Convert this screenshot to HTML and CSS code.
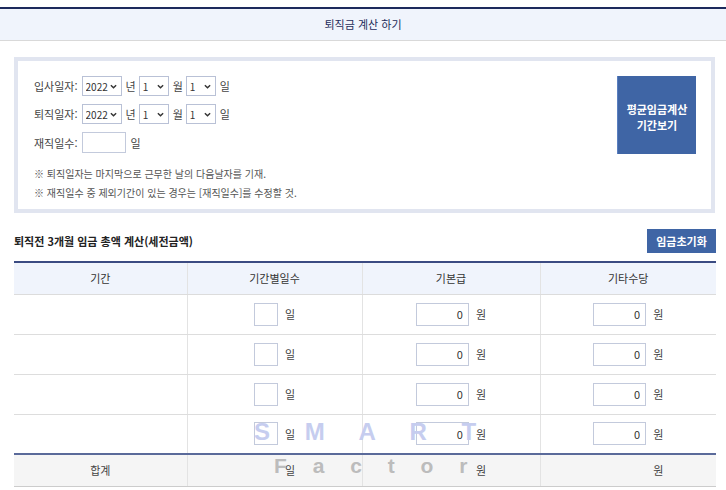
FILE: index.html
```html
<!DOCTYPE html>
<html lang="ko">
<head>
<meta charset="utf-8">
<title>퇴직금 계산 하기</title>
<link rel="stylesheet" href="styles.css">
</head>
<body>
<div class="page">
  <div class="title-bar">퇴직금 계산 하기</div>
  <div class="content">
    <div class="date-box">
      <div class="date-form">
        <div class="form-row">
          <span class="label">입사일자:</span>
          <span class="sel-wrap sel-year"><select class="sel"><option>2022</option></select><svg class="chev" viewBox="0 0 8 5"><path d="M1 1 L4 4 L7 1" /></svg></span>
          <span class="unit">년</span>
          <span class="sel-wrap sel-small"><select class="sel"><option>1</option></select><svg class="chev" viewBox="0 0 8 5"><path d="M1 1 L4 4 L7 1" /></svg></span>
          <span class="unit">월</span>
          <span class="sel-wrap sel-small"><select class="sel"><option>1</option></select><svg class="chev" viewBox="0 0 8 5"><path d="M1 1 L4 4 L7 1" /></svg></span>
          <span class="unit">일</span>
        </div>
        <div class="form-row">
          <span class="label">퇴직일자:</span>
          <span class="sel-wrap sel-year"><select class="sel"><option>2022</option></select><svg class="chev" viewBox="0 0 8 5"><path d="M1 1 L4 4 L7 1" /></svg></span>
          <span class="unit">년</span>
          <span class="sel-wrap sel-small"><select class="sel"><option>1</option></select><svg class="chev" viewBox="0 0 8 5"><path d="M1 1 L4 4 L7 1" /></svg></span>
          <span class="unit">월</span>
          <span class="sel-wrap sel-small"><select class="sel"><option>1</option></select><svg class="chev" viewBox="0 0 8 5"><path d="M1 1 L4 4 L7 1" /></svg></span>
          <span class="unit">일</span>
        </div>
        <div class="form-row form-row-days">
          <span class="label">재직일수:</span>
          <input class="days-input" type="text">
          <span class="unit">일</span>
        </div>
        <div class="notes">
          <p>※ 퇴직일자는 마지막으로 근무한 날의 다음날자를 기재.</p>
          <p>※ 재직일수 중 제외기간이 있는 경우는 [재직일수]를 수정할 것.</p>
        </div>
      </div>
      <button class="btn btn-period">평균임금계산<br>기간보기</button>
    </div>

    <div class="section-head">
      <h3 class="section-title">퇴직전 3개월 임금 총액 계산(세전금액)</h3>
      <button class="btn btn-reset">임금초기화</button>
    </div>

    <div class="table-wrap">
      <table class="wage-table">
        <colgroup>
          <col class="c1"><col class="c2"><col class="c3"><col class="c4">
        </colgroup>
        <thead>
          <tr><th>기간</th><th>기간별일수</th><th>기본급</th><th>기타수당</th></tr>
        </thead>
        <tbody>
          <tr>
            <td></td>
            <td><span class="cell-grp"><input class="in-day" type="text"><span class="u">일</span></span></td>
            <td><span class="cell-grp"><input class="in-money" type="text" value="0"><span class="u">원</span></span></td>
            <td><span class="cell-grp"><input class="in-money" type="text" value="0"><span class="u">원</span></span></td>
          </tr>
          <tr>
            <td></td>
            <td><span class="cell-grp"><input class="in-day" type="text"><span class="u">일</span></span></td>
            <td><span class="cell-grp"><input class="in-money" type="text" value="0"><span class="u">원</span></span></td>
            <td><span class="cell-grp"><input class="in-money" type="text" value="0"><span class="u">원</span></span></td>
          </tr>
          <tr>
            <td></td>
            <td><span class="cell-grp"><input class="in-day" type="text"><span class="u">일</span></span></td>
            <td><span class="cell-grp"><input class="in-money" type="text" value="0"><span class="u">원</span></span></td>
            <td><span class="cell-grp"><input class="in-money" type="text" value="0"><span class="u">원</span></span></td>
          </tr>
          <tr>
            <td></td>
            <td><span class="cell-grp"><input class="in-day" type="text"><span class="u">일</span></span></td>
            <td><span class="cell-grp"><input class="in-money" type="text" value="0"><span class="u">원</span></span></td>
            <td><span class="cell-grp"><input class="in-money" type="text" value="0"><span class="u">원</span></span></td>
          </tr>
        </tbody>
        <tfoot>
          <tr>
            <td>합계</td>
            <td><span class="cell-grp"><span class="sp-day"></span><span class="u">일</span></span></td>
            <td><span class="cell-grp"><span class="sp-money"></span><span class="u">원</span></span></td>
            <td><span class="cell-grp"><span class="sp-money"></span><span class="u">원</span></span></td>
          </tr>
        </tfoot>
      </table>
      <div class="wm wm-smart">S M A R T</div>
      <div class="wm wm-factor">F a c t o r</div>
    </div>
  </div>
</div>
</body>
</html>
```
FILE: styles.css
```css
* { box-sizing: border-box; }
body {
  margin: 0;
  background: #fff;
  font-family: "Noto Sans CJK KR", "Noto Sans", sans-serif;
  color: #333;
}
.page { padding-top: 7px; width: 726px; }
.title-bar {
  border-top: 2px solid #1c2a5c;
  border-bottom: 1px solid #d9d9d9;
  background: #f0f4fc;
  height: 34px;
  line-height: 31px;
  text-align: center;
  font-size: 11px;
  color: #1e2c5a;
}
.content { padding: 16px 10px 0 14px; }
.date-box {
  border: 4px solid #e1e5f0;
  padding: 15px 15px 7px 16px;
  display: flex;
  justify-content: space-between;
  align-items: flex-start;
  width: 701px;
}
.form-row {
  display: flex;
  align-items: center;
  height: 20px;
  margin-bottom: 8px;
  font-size: 11px;
  color: #444;
}
.form-row-days { height: 21px; margin-bottom: 0; }
.label { margin-right: 4px; }
.unit { margin: 0 3px 0 4px; }
.sel-wrap { position: relative; display: inline-block; height: 20px; }
.sel-year { width: 40px; }
.sel-small { width: 30px; }
.sel {
  appearance: none;
  -webkit-appearance: none;
  width: 100%;
  height: 20px;
  border: 1px solid #b9c1d6;
  border-radius: 0;
  background: #fff;
  font-family: "Noto Sans CJK KR", sans-serif;
  font-size: 10px;
  color: #333;
  padding: 0 0 0 3px;
  margin: 0;
}
.chev {
  position: absolute;
  right: 5px;
  top: 8px;
  width: 7px;
  height: 5px;
  pointer-events: none;
}
.chev path { fill: none; stroke: #333; stroke-width: 1.6; }
.days-input {
  width: 44px;
  height: 21px;
  border: 1px solid #c3cadc;
  margin: 0 1px 0 0;
  padding: 0;
}
.notes { margin-top: 11px; font-size: 10px; color: #555; }
.notes p { margin: 0; line-height: 19px; }
.btn {
  border: none;
  background: #3f65a5;
  color: #fff;
  font-family: "Noto Sans CJK KR", sans-serif;
  font-weight: bold;
  font-size: 11px;
  padding: 0;
  cursor: pointer;
}
.btn-period {
  width: 79px;
  height: 78px;
  line-height: 16px;
  padding-top: 4px;
  border-left: 1px solid #5a7fc0;
}
.section-head {
  display: flex;
  justify-content: space-between;
  align-items: center;
  margin-top: 16px;
  height: 24px;
}
.section-title { margin: 0; font-size: 11px; font-weight: bold; color: #222; }
.btn-reset { width: 69px; height: 24px; }
.table-wrap { position: relative; margin-top: 8px; }
.wage-table {
  width: 702px;
  border-collapse: collapse;
  table-layout: fixed;
  font-size: 11px;
}
.c1 { width: 173px; }
.c2 { width: 175px; }
.c3 { width: 178px; }
.c4 { width: 176px; }
.wage-table thead tr { border-top: 2px solid #3b4b82; }
.wage-table th {
  background: #f0f4fc;
  height: 32px;
  font-weight: normal;
  color: #333;
  border-bottom: 1px solid #dcdcdc;
}
.wage-table th + th, .wage-table td + td { border-left: 1px solid #e3e3e3; }
.wage-table td {
  height: 40px;
  text-align: center;
  border-bottom: 1px solid #dddddd;
  padding: 0;
  color: #444;
}
.wage-table tfoot tr { border-top: 2px solid #5a6a9a; }
.wage-table tfoot td {
  background: #f5f5f5;
  height: 32px;
  border-bottom: 1px solid #cccccc;
}
.cell-grp { display: inline-flex; align-items: center; gap: 7px; vertical-align: middle; }
.in-day, .sp-day { width: 24px; height: 23px; }
.in-money, .sp-money { width: 53px; height: 23px; }
.in-day, .in-money {
  border: 1px solid #c3cadc;
  margin: 0;
  padding: 0 5px 0 0;
  text-align: right;
  font-family: "Noto Sans CJK KR", sans-serif;
  font-size: 11px;
  color: #333;
  background: #fff;
}
.sp-day, .sp-money { display: inline-block; }
.u { font-size: 11px; }
.wm {
  position: absolute;
  font-family: "Liberation Sans", Arial, sans-serif;
  font-weight: bold;
  line-height: 1;
  white-space: pre;
  pointer-events: none;
}
.wm-smart { left: 240px; top: 159px; font-size: 24px; letter-spacing: 14px; color: #c6cdef; }
.wm-factor { left: 260px; top: 194px; font-size: 21px; letter-spacing: 10px; color: #bcbcbc; }
```
